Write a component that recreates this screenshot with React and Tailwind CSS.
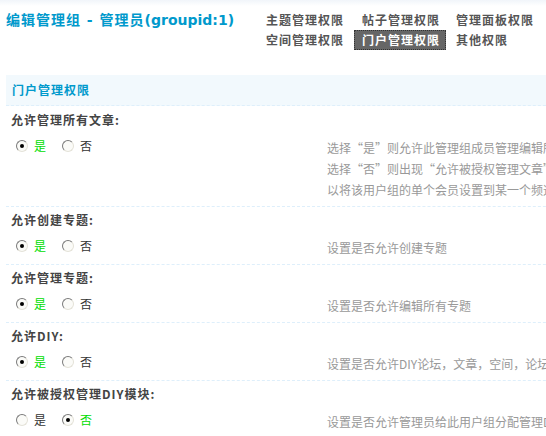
import React from 'react'

const tabs = [
  { label: '主题管理权限' },
  { label: '帖子管理权限' },
  { label: '管理面板权限' },
  { label: '空间管理权限' },
  { label: '门户管理权限', active: true },
  { label: '其他权限' },
]

const rows = [
  {
    title: '允许管理所有文章:',
    value: true,
    desc: ['选择“是”则允许此管理组成员管理编辑所有文章', '选择“否”则出现“允许被授权管理文章”，可', '以将该用户组的单个会员设置到某一个频道中进行管理'],
  },
  { title: '允许创建专题:', value: true, desc: ['设置是否允许创建专题'] },
  { title: '允许管理专题:', value: true, desc: ['设置是否允许编辑所有专题'] },
  { title: '允许DIY:', value: true, desc: ['设置是否允许DIY论坛，文章，空间，论坛列表等页面'] },
  { title: '允许被授权管理DIY模块:', value: false, desc: ['设置是否允许管理员给此用户组分配管理DIY模块的权限'] },
]

// full-width quotes like the old bitmap font
function withQuotes(text) {
  return text.split(/([“”])/).map((part, i) => {
    if (part === '“') return <span key={i} className="inline-block w-[12px] text-right">“</span>
    if (part === '”') return <span key={i} className="inline-block w-[12px] text-left">”</span>
    return part
  })
}

function Radio({ checked, label }) {
  return (
    <label className="mr-[16px] flex items-center">
      <span className="flex h-[12px] w-[12px] items-center justify-center rounded-full border border-t-[#7a7a7a] border-l-[#7a7a7a] border-r-[#e4e2d8] border-b-[#e4e2d8] bg-[#fbfbf8]">
        {checked && <span className="h-[4px] w-[4px] rounded-full bg-black" />}
      </span>
      <span className={`ml-[6px] ${checked ? 'text-[#00dd00]' : 'text-[#333]'}`}>{label}</span>
    </label>
  )
}

export default function App() {
  return (
    <div className="h-[436px] w-full overflow-hidden bg-white font-['Noto_Sans_CJK_SC',sans-serif] text-[12px] text-[#333]">
      {/* page title + tabs */}
      <div className="flex h-[75px] bg-[linear-gradient(#f1f5fa,#fff_6px)]">
        <h3 className="w-[258px] shrink-0 whitespace-nowrap pl-[6px] pt-[10px] font-['DejaVu_Sans','Noto_Sans_CJK_SC',sans-serif] text-[14px] font-bold leading-[20px] tracking-[1px] text-[#09c]">
          编辑管理组 - 管理员<span className="tracking-normal">(groupid:1)</span>
        </h3>
        <ul className="grid h-fit grid-cols-[96px_94px_auto] pt-[10px]">
          {tabs.map((t) =>
            t.active ? (
              <li key={t.label} className="h-[20px] w-[92px] whitespace-nowrap border border-dotted border-[#333] bg-[#666] px-[7px] font-bold leading-[18px] tracking-[1px] text-white">
                {t.label}
              </li>
            ) : (
              <li key={t.label} className="h-[20px] whitespace-nowrap px-[8px] font-bold leading-[20px] tracking-[1px] text-[#555]">
                {t.label}
              </li>
            )
          )}
        </ul>
      </div>

      {/* settings table */}
      <div className="ml-[6px] w-[580px]">
        <div className="h-[31px] border-b border-dashed border-[#deeffb] bg-[#f2f9fd] pl-[6px] font-bold leading-[30px] tracking-[1px] text-[#09c]">
          门户管理权限
        </div>
        {rows.map((r, i) => (
          <div key={r.title} className={i ? 'border-t border-dashed border-[#deeffb]' : ''}>
            <div className={`${i ? 'pt-[3px]' : 'pt-[4px]'} pb-[1px] pl-[5px] font-bold leading-[20px] tracking-[1px] text-[#444]`}>
              {r.title}
            </div>
            <div className="grid grid-cols-[315px_265px] items-start">
              <div className="flex items-center pl-[10px] pt-[5px] leading-[20px]">
                <Radio checked={r.value} label="是" />
                <Radio checked={!r.value} label="否" />
              </div>
              <div className="whitespace-nowrap py-[6px] pl-[6px] leading-[21px] text-[#999]">
                {r.desc.map((line, j) => (
                  <div key={j}>{withQuotes(line)}</div>
                ))}
              </div>
            </div>
          </div>
        ))}
      </div>
    </div>
  )
}
